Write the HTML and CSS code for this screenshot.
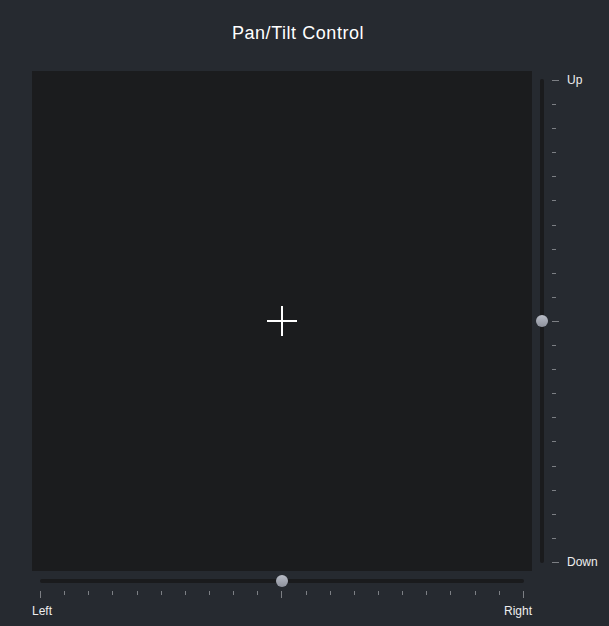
FILE: index.html
```html
<!DOCTYPE html>
<html>
<head>
<meta charset="utf-8">
<link rel="stylesheet" href="styles.css">
</head>
<body>
<div class="title">Pan/Tilt Control</div>
<div class="main">
  <div class="left">
    <div class="pad">
      <svg class="cross" width="30" height="30" viewBox="0 0 30 30">
        <rect x="0" y="14" width="30" height="2" fill="#ffffff"/>
        <rect x="14" y="0" width="2" height="30" fill="#ffffff"/>
      </svg>
    </div>
    <div class="hslider">
      <div class="htrack"><div class="handle"></div></div>
      <div class="hticks">
        <i class="major"></i><i></i><i></i><i></i><i></i><i></i><i></i><i></i><i></i><i></i>
        <i class="major"></i>
        <i></i><i></i><i></i><i></i><i></i><i></i><i></i><i></i><i></i><i class="major"></i>
      </div>
      <div class="hlabels"><span>Left</span><span>Right</span></div>
    </div>
  </div>
  <div class="vslider">
    <div class="vtrackwrap"><div class="vtrack"><div class="handle"></div></div></div>
    <div class="vticks">
      <i class="major"></i><i></i><i></i><i></i><i></i><i></i><i></i><i></i><i></i><i></i>
      <i class="major"></i>
      <i></i><i></i><i></i><i></i><i></i><i></i><i></i><i></i><i></i><i class="major"></i>
    </div>
    <div class="vlabels"><span>Up</span><span>Down</span></div>
  </div>
</div>
</body>
</html>
```
FILE: styles.css
```css
html, body {
  margin: 0;
  padding: 0;
}
body {
  width: 609px;
  height: 626px;
  background: #262a30;
  font-family: "Liberation Sans", Arial, sans-serif;
  color: #f2f2f2;
  overflow: hidden;
}
.title {
  padding-top: 23px;
  padding-right: 13px;
  height: 20px;
  line-height: 20px;
  font-size: 18px;
  letter-spacing: 0.55px;
  text-align: center;
  color: #ffffff;
}
.main {
  display: flex;
  margin-top: 28px;
  padding-left: 32px;
}
.left {
  display: flex;
  flex-direction: column;
  width: 500px;
}
.pad {
  width: 500px;
  height: 500px;
  background: #1b1c1e;
  display: flex;
  align-items: center;
  justify-content: center;
}
.cross {
  display: block;
}
.hslider {
  display: flex;
  flex-direction: column;
}
.htrack {
  position: relative;
  margin: 8px 0 0 8px;
  width: 484px;
  height: 4px;
  border-radius: 2px;
  background: #1a1b1d;
}
.handle {
  position: absolute;
  width: 12px;
  height: 12px;
  border-radius: 50%;
  background: linear-gradient(#b9bdc7, #8d919c);
  left: 50%;
  top: 50%;
  margin: -6px 0 0 -6px;
}
.hticks {
  display: flex;
  justify-content: space-between;
  align-items: flex-start;
  margin: 8px 0 0 8px;
  width: 484px;
  height: 7px;
}
.hticks i {
  display: block;
  width: 1px;
  height: 4px;
  background: #7c7f84;
}
.hticks i.major {
  height: 7px;
}
.hlabels {
  display: flex;
  justify-content: space-between;
  margin-top: 6px;
  font-size: 12px;
  line-height: 14px;
  color: #eeeeee;
}
.vslider {
  display: flex;
}
.vtrackwrap {
  width: 20px;
  display: flex;
  justify-content: center;
  padding-top: 8px;
}
.vtrack {
  position: relative;
  width: 4px;
  height: 484px;
  border-radius: 2px;
  background: #1a1b1d;
}
.vticks {
  display: flex;
  flex-direction: column;
  justify-content: space-between;
  margin-top: 9px;
  width: 7px;
  height: 483px;
}
.vticks i {
  display: block;
  width: 4px;
  height: 1px;
  background: #7c7f84;
}
.vticks i.major {
  width: 7px;
}
.vlabels {
  display: flex;
  flex-direction: column;
  justify-content: space-between;
  margin: 2px 0 0 8px;
  height: 496px;
  font-size: 12px;
  line-height: 14px;
  color: #eeeeee;
}
```
